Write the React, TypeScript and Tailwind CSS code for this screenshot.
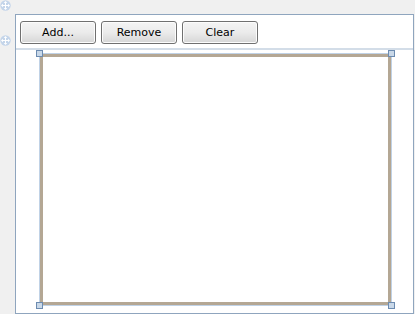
import React from 'react';

const MoveIcon: React.FC = () => (
  <svg width="11" height="11" viewBox="0 0 11 11">
    <circle cx="5.5" cy="5.5" r="5.2" fill="#c4d5ea" />
    <path d="M5.5 1 L7.3 3 H3.7 Z M5.5 10 L7.3 8 H3.7 Z M1 5.5 L3 3.7 V7.3 Z M10 5.5 L8 3.7 V7.3 Z" fill="#ffffff" />
    <rect x="5" y="2.5" width="1" height="6" fill="#ffffff" />
    <rect x="2.5" y="5" width="6" height="1" fill="#ffffff" />
  </svg>
);

const Button: React.FC<{ label: string }> = ({ label }) => (
  <button className="h-[23px] w-[76px] rounded-[3px] border border-[#707070] bg-gradient-to-b from-[#f4f4f4] via-[#ebebeb] to-[#d6d6d6] text-[11px] leading-none text-black shadow-[inset_0_0_0_1px_#fcfcfc]">
    {label}
  </button>
);

const Handle: React.FC<{ className: string }> = ({ className }) => (
  <div className={`absolute h-[7px] w-[7px] border border-[#6c8bb0] bg-[#c9d8e8] ${className}`} />
);

export default function App() {
  return (
    <div className="flex h-[314px] w-[415px] bg-[#f0f0f0]" style={{ fontFamily: '"DejaVu Sans", Tahoma, sans-serif' }}>
      <div className="flex w-[15px] flex-col items-start gap-[24px]">
        <MoveIcon />
        <MoveIcon />
      </div>
      <div className="mt-[14px] flex h-[300px] w-[399px] flex-col border border-[#8fa5be] bg-white">
        <div className="flex gap-[5px] px-[4px] pt-[6px] pb-[4px]">
          <Button label="Add..." />
          <Button label="Remove" />
          <Button label="Clear" />
        </div>
        <div className="h-[2px] bg-[#d3dde8]" />
        <div className="relative flex-1 pl-[23px] pt-[3px]">
          <div className="relative h-[253px] w-[353px] border border-[#c0d2e6]">
            <div className="h-full w-full border-[3px] border-[#b4a794]" />
            <Handle className="-left-[4px] -top-[4px]" />
            <Handle className="-right-[4px] -top-[4px]" />
            <Handle className="-left-[4px] -bottom-[4px]" />
            <Handle className="-right-[4px] -bottom-[4px]" />
          </div>
        </div>
      </div>
    </div>
  );
}
